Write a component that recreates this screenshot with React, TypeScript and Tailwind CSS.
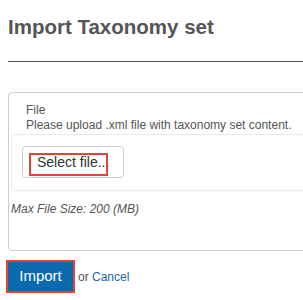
export default function App() {
  return (
    <div className="w-[303px] h-[300px] overflow-hidden bg-white font-['Liberation_Sans',Arial,sans-serif]">
      <div className="ml-2 w-[340px]">
        {/* Heading */}
        <h1 className="pt-[15px] text-[20.5px] leading-[23px] font-bold text-[#555]">Import Taxonomy set</h1>
        <div className="mt-[23px] h-px bg-[#555]" />

        {/* File panel */}
        <div className="mt-[30px] h-[159px] rounded border border-[#ccc]">
          <div className="pt-[10px] pl-[17px] text-[12px] leading-[15px] text-[#555]">
            <div>File</div>
            <div>Please upload .xml file with taxonomy set content.</div>
          </div>
          <div className="ml-[2px] mt-[1px] rounded border border-[#eaeaea] pt-[11px] pb-[12px] pl-[10px]">
            <button className="relative h-[32px] w-[102px] rounded border border-[#ccc] bg-white text-left pl-[14px] text-[14px] text-[#333]">
              Select file...
              <span className="absolute left-[6px] top-[6px] h-[23px] w-[79px] border-2 border-[#e5413b]" />
            </button>
          </div>
          <div className="mt-[11px] pl-[2px] text-[12px] leading-[15px] italic text-[#555]">Max File Size: 200 (MB)</div>
        </div>

        {/* Actions */}
        <div className="mt-[11px] flex items-center gap-[5px] text-[12px]">
          <button className="h-[29px] w-[65px] bg-[#0b6aab] text-[15px] text-white outline-2 outline-[#e5413b]">Import</button>
          <span className="text-[#555]">
            or <a className="text-[#1769aa]">Cancel</a>
          </span>
        </div>
      </div>
    </div>
  );
}
